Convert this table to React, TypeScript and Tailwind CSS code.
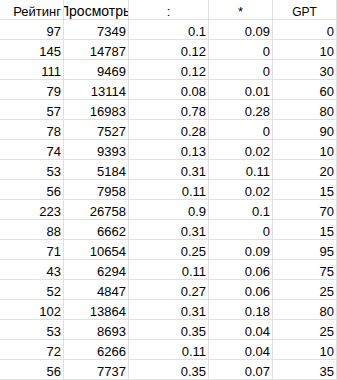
import React from 'react';

const rows: string[][] = [
  ['97', '7349', '0.1', '0.09', '0'],
  ['145', '14787', '0.12', '0', '10'],
  ['111', '9469', '0.12', '0', '30'],
  ['79', '13114', '0.08', '0.01', '60'],
  ['57', '16983', '0.78', '0.28', '80'],
  ['78', '7527', '0.28', '0', '90'],
  ['74', '9393', '0.13', '0.02', '10'],
  ['53', '5184', '0.31', '0.11', '20'],
  ['56', '7958', '0.11', '0.02', '15'],
  ['223', '26758', '0.9', '0.1', '70'],
  ['88', '6662', '0.31', '0', '15'],
  ['71', '10654', '0.25', '0.09', '95'],
  ['43', '6294', '0.11', '0.06', '75'],
  ['52', '4847', '0.27', '0.06', '25'],
  ['102', '13864', '0.31', '0.18', '80'],
  ['53', '8693', '0.35', '0.04', '25'],
  ['72', '6266', '0.11', '0.04', '10'],
  ['56', '7737', '0.35', '0.07', '35'],
];

const App: React.FC = () => {
  return (
    <div className="w-[337px] h-[380px] overflow-hidden bg-white text-black font-['Liberation_Sans',Arial,sans-serif] text-[13px]">
      <div className="grid grid-cols-[64px_65px_80px_64px_64px]">
        {/* header row */}
        <div className="h-5 border-r border-b border-[#e1e1e1] flex items-end justify-end pr-[2px] pb-[1px] leading-none text-[13px] overflow-hidden whitespace-nowrap">
          Рейтинг
        </div>
        <div className="h-5 border-r border-b border-[#e1e1e1] flex items-end justify-center pb-[1px] leading-none text-[14px] overflow-hidden whitespace-nowrap">
          <span className="shrink-0">Просмотры</span>
        </div>
        <div className="h-5 border-r border-b border-[#e1e1e1] flex items-end justify-center pb-[1px] leading-none text-[13px]">
          :
        </div>
        <div className="h-5 border-r border-b border-[#e1e1e1] flex items-end justify-center pb-[1px] leading-none text-[13px]">
          *
        </div>
        <div className="h-5 border-r border-b border-[#e1e1e1] flex items-end justify-center pb-[1px] leading-none text-[12px]">
          GPT
        </div>

        {rows.map((row, r) =>
          row.map((cell, c) => (
            <div
              key={`${r}-${c}`}
              className="h-5 border-r border-b border-[#e1e1e1] flex items-end justify-end pr-[2px] pb-[1px] leading-none"
            >
              {cell}
            </div>
          ))
        )}
      </div>
    </div>
  );
};

export default App;
